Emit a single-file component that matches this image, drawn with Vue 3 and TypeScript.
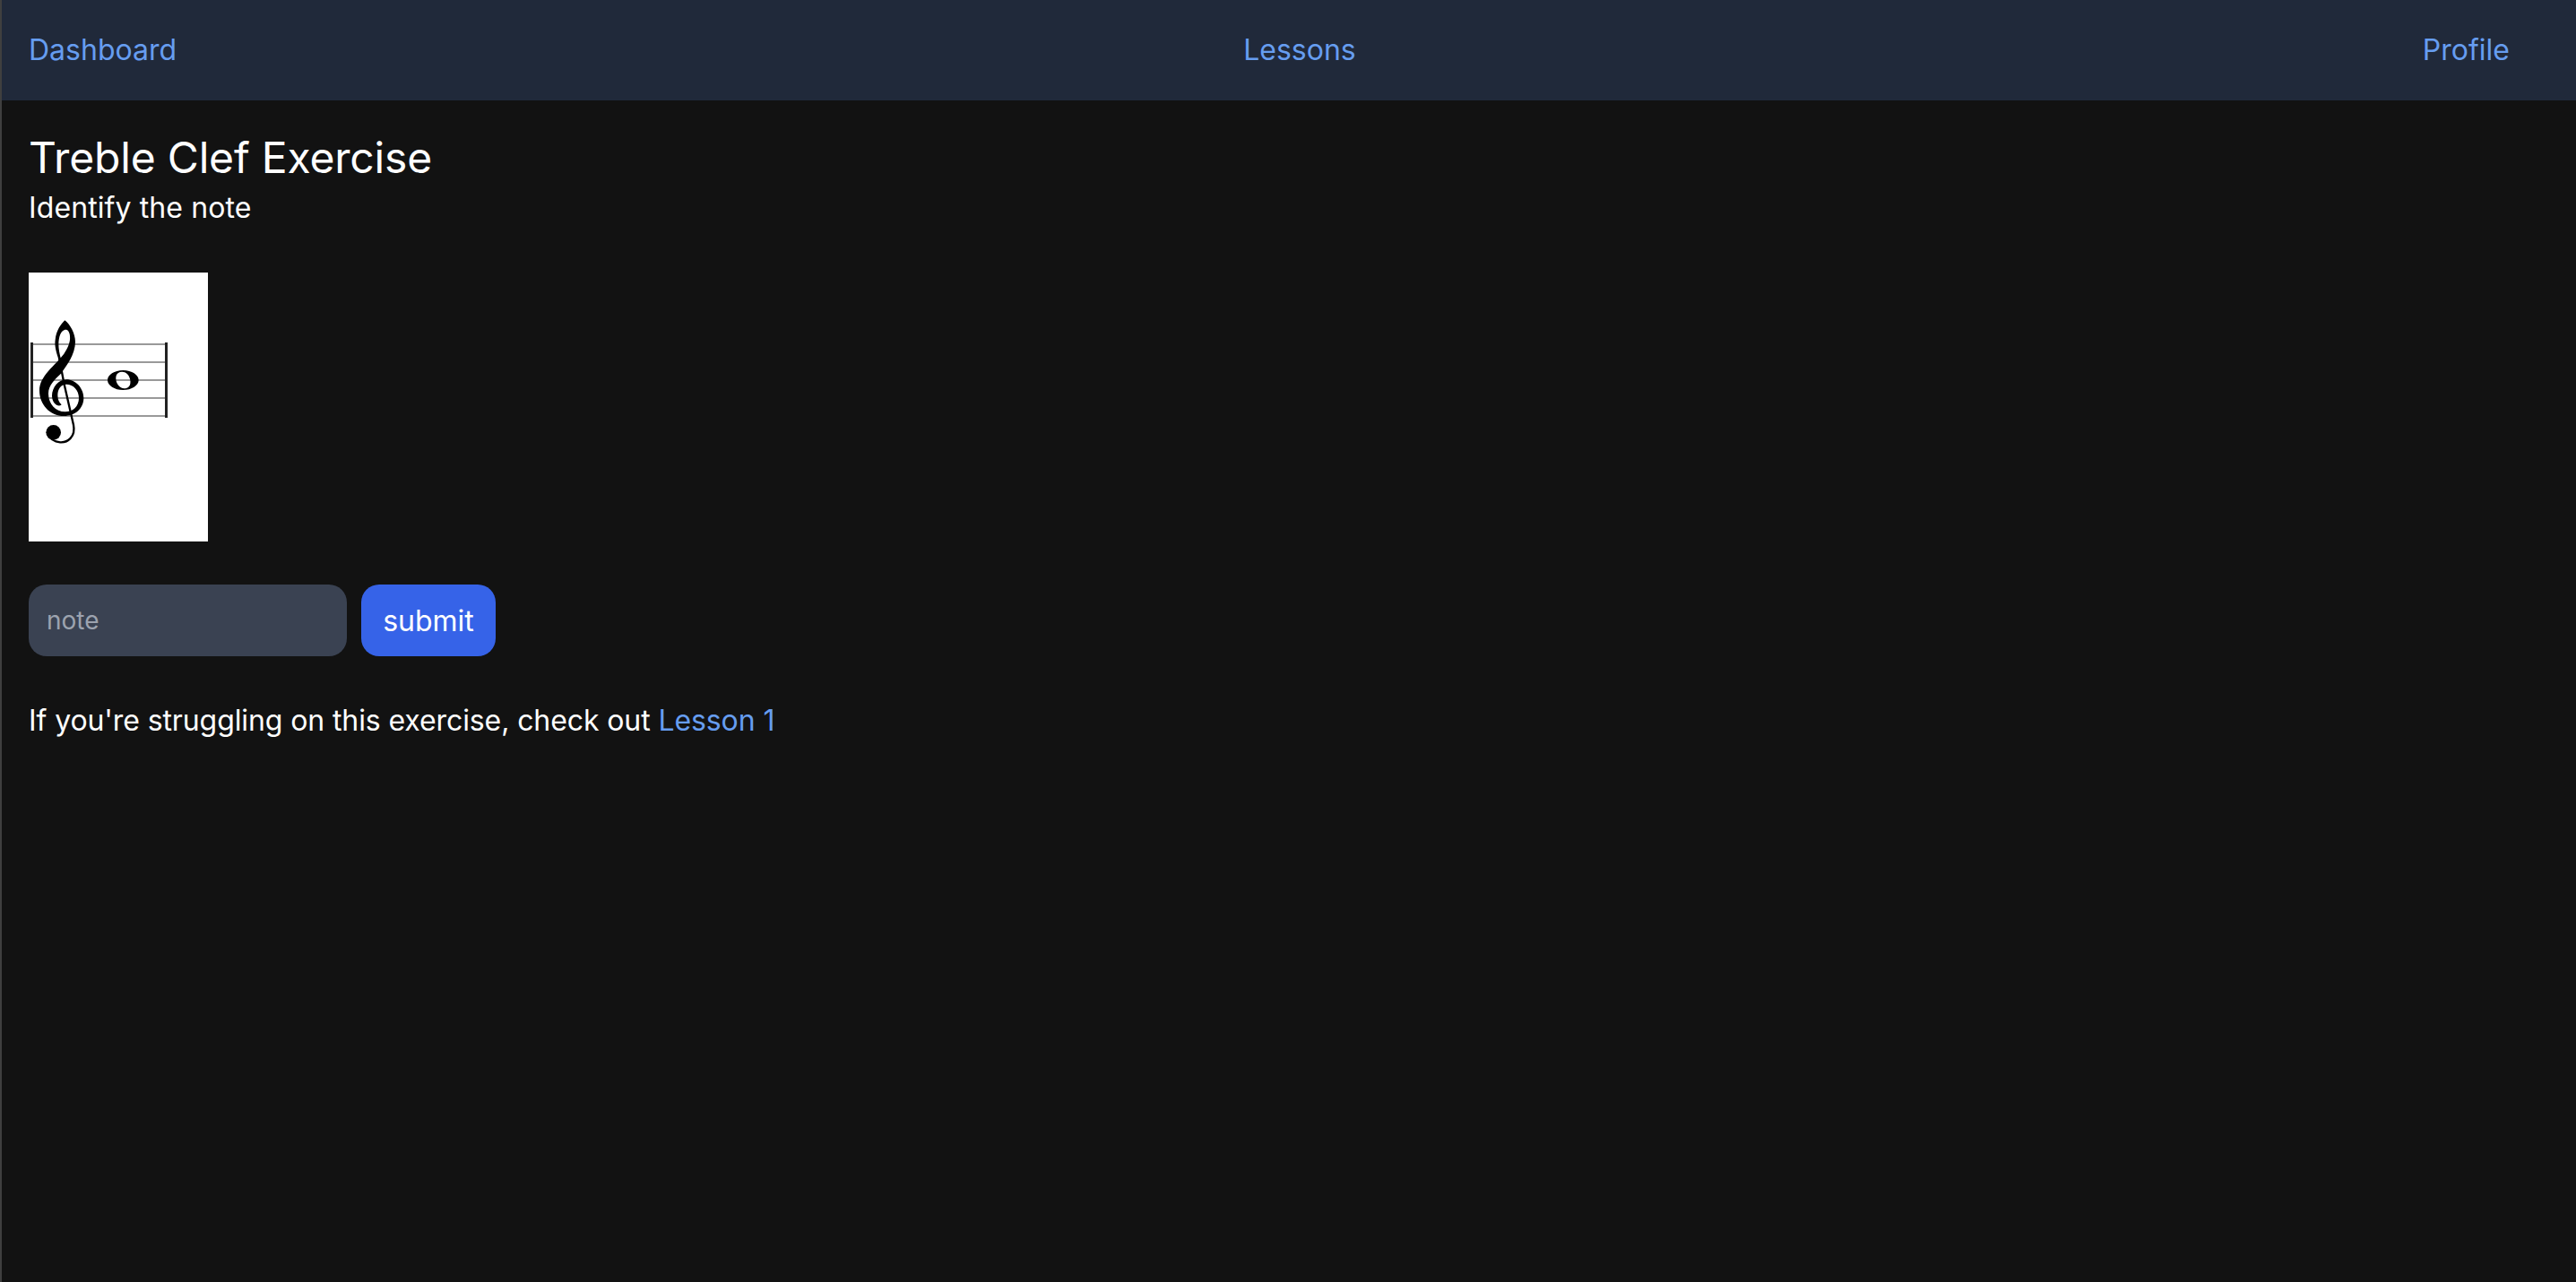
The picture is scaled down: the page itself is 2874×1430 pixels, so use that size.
<script setup lang="ts">
import { ref } from 'vue'

const note = ref('')
const staffLines = [80, 100, 120, 140, 160]
</script>

<template>
  <div class="page">
    <nav class="navbar">
      <a class="link" href="#">Dashboard</a>
      <a class="link" href="#">Lessons</a>
      <a class="link profile" href="#">Profile</a>
    </nav>
    <main class="content">
      <h1 class="title">Treble Clef Exercise</h1>
      <p class="subtitle">Identify the note</p>
      <svg class="score" viewBox="0 0 200 300" width="200" height="300">
        <rect width="200" height="300" fill="#fff" />
        <line v-for="y in staffLines" :key="y" x1="2" x2="154" :y1="y" :y2="y" stroke="#999" stroke-width="2" />
        <rect x="2" y="78" width="3" height="84" fill="#222" />
        <rect x="152" y="78" width="3" height="84" fill="#222" />
        <g transform="scale(0.33333)">
          <path d="M121 160C140 175 156 205 156 232C156 275 125 315 108 338C90 356 66 375 66 405C66 440 90 466 122 466C148 466 168 448 168 420C168 394 150 374 126 374C108 374 97 390 97 410C97 425 102 435 110 442C100 452 78 440 78 412C78 385 100 358 126 358C158 358 184 388 184 420C184 455 155 480 118 480C70 480 36 440 36 395C36 345 90 310 118 272C132 250 140 232 138 212C136 195 128 190 120 192C108 195 100 215 100 240C100 255 103 270 108 290L100 290C92 265 86 245 89 225C92 195 108 172 121 160Z" fill="#000" />
          <path d="M102 285L118 370L150 510C158 550 130 570 105 568C85 566 70 555 62 540" fill="none" stroke="#000" stroke-width="7" />
          <circle cx="83" cy="535" r="25" fill="#000" />
          <path fill-rule="evenodd" d="M316 327C345 327 368 342 368 360C368 378 345 393 316 393C287 393 264 378 264 360C264 342 287 327 316 327ZM300 336C289 342 290 363 299 376C308 390 324 390 333 384C344 377 342 356 333 343C324 331 309 330 300 336Z" fill="#000" />
        </g>
      </svg>
      <form class="answer" @submit.prevent>
        <input v-model="note" class="note-input" type="text" placeholder="note" />
        <button class="submit" type="submit">submit</button>
      </form>
      <p class="hint">If you're struggling on this exercise, check out <a class="link" href="#">Lesson 1</a></p>
    </main>
  </div>
</template>

<style>
html,
body {
  margin: 0;
  background: #121212;
}
</style>

<style scoped>
.page {
  min-height: 1430px;
  box-sizing: border-box;
  border-left: 2px solid #3f3f3f;
  background: #121212;
  color: #fff;
  font-family: Inter, "Liberation Sans", sans-serif;
  font-size: 32px;
}

.navbar {
  display: flex;
  justify-content: space-between;
  align-items: center;
  height: 112px;
  box-sizing: border-box;
  padding: 0 74px 2px 30px;
  background: #20293a;
}

.link {
  color: #669df0;
  text-decoration: none;
}

.content {
  padding: 28px 30px;
}

.title {
  margin: 0;
  font-size: 48px;
  line-height: 72px;
  font-weight: 400;
  letter-spacing: -0.18px;
}

.subtitle {
  margin: 0;
  line-height: 40px;
  letter-spacing: 0.1px;
}

.score {
  display: block;
  margin-top: 52px;
}

.answer {
  display: flex;
  gap: 16px;
  margin-top: 48px;
}

.note-input {
  width: 355px;
  height: 80px;
  box-sizing: border-box;
  padding: 0 20px;
  border: 0;
  border-radius: 20px;
  background: #3a4252;
  color: #fff;
  font: inherit;
  font-size: 28px;
  outline: none;
}

.note-input::placeholder {
  color: #9ca3af;
}

.submit {
  width: 150px;
  height: 80px;
  border: 0;
  border-radius: 20px;
  background: #3663e8;
  color: #fff;
  font: inherit;
}

.hint {
  margin: 48px 0 0;
  line-height: 48px;
  letter-spacing: -0.1px;
}
</style>
